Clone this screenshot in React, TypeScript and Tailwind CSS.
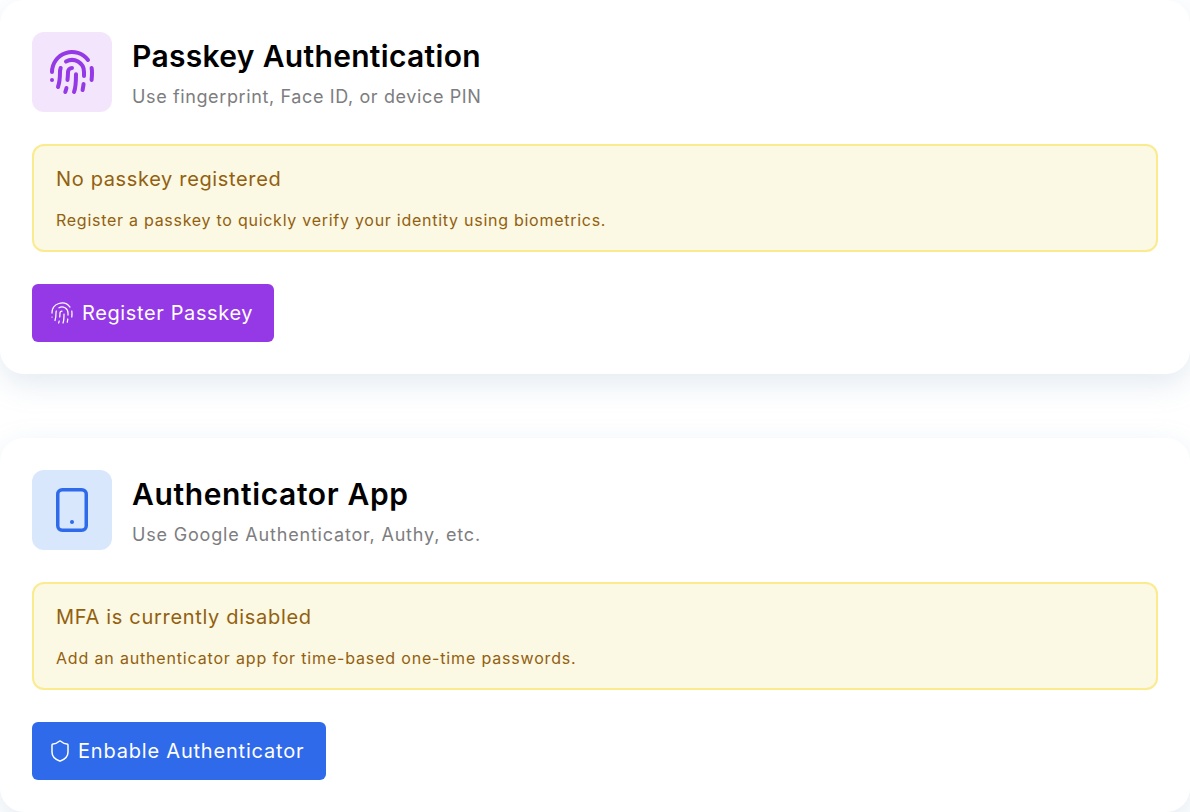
import { Fingerprint, Shield } from "lucide-react";

function Notice({ title, text, titleClass, textClass }: { title: string; text: string; titleClass: string; textClass: string }) {
  return (
    <div className="mt-8 h-[108px] rounded-xl border-2 border-[#fbeb8f] bg-[#fbf8e4] pl-[22px] pr-[23px] pt-[19px] text-[#92600f]">
      <p className={`text-[20px] leading-[28px] ${titleClass}`}>{title}</p>
      <p className={`mt-[15px] text-[16px] leading-[24px] ${textClass}`}>{text}</p>
    </div>
  );
}

export default function App() {
  return (
    <div
      className="flex h-[812px] flex-col gap-16 overflow-hidden bg-white text-black"
      style={{ fontFamily: '"Inter", "Noto Sans", sans-serif' }}
    >
      <section className="rounded-3xl bg-white p-8 shadow-[0_10px_30px_rgba(130,165,195,0.22)]">
        <div className="flex items-center gap-5">
          <div className="flex h-20 w-20 items-center justify-center rounded-xl bg-[#f3e6fc]">
            <Fingerprint size={48} strokeWidth={2} className="text-[#9538e6]" />
          </div>
          <div className="pt-[5px]">
            <h2 className="text-[30px] font-semibold leading-[36px] tracking-[0.32px]">Passkey Authentication</h2>
            <p className="mt-[9px] text-[18px] leading-[28px] tracking-[0.62px] text-[#7d7d80]">Use fingerprint, Face ID, or device PIN</p>
          </div>
        </div>
        <Notice
          title="No passkey registered"
          text="Register a passkey to quickly verify your identity using biometrics."
          titleClass="tracking-[0.65px]"
          textClass="tracking-[0.73px]"
        />
        <button className="mt-8 flex h-[58px] items-center gap-2 rounded-md bg-[#9538e6] pl-[18px] pr-[21px] text-[20px] tracking-[0.62px] text-white">
          <Fingerprint size={24} strokeWidth={1.25} />
          Register Passkey
        </button>
      </section>

      <section className="rounded-3xl bg-white p-8 shadow-[0_10px_30px_rgba(130,165,195,0.22)]">
        <div className="flex items-center gap-5">
          <div className="flex h-20 w-20 items-center justify-center rounded-xl bg-[#d8e7fb]">
            <svg width="32" height="44" viewBox="0 0 32 44" fill="none" className="text-[#2f6aeb]">
              <rect x="1.75" y="1.75" width="28.5" height="40.5" rx="4.5" stroke="currentColor" strokeWidth="3.5" />
              <circle cx="16" cy="34" r="2" fill="currentColor" />
            </svg>
          </div>
          <div className="pt-[5px]">
            <h2 className="text-[30px] font-semibold leading-[36px] tracking-[0.62px]">Authenticator App</h2>
            <p className="mt-[9px] text-[18px] leading-[28px] tracking-[0.81px] text-[#7d7d80]">Use Google Authenticator, Authy, etc.</p>
          </div>
        </div>
        <Notice
          title="MFA is currently disabled"
          text="Add an authenticator app for time-based one-time passwords."
          titleClass="tracking-[0.69px]"
          textClass="tracking-[0.83px]"
        />
        <button className="mt-8 flex h-[58px] items-center gap-1.5 rounded-md bg-[#2f6aeb] pl-[16px] pr-[22px] text-[20px] tracking-[0.8px] text-white">
          <Shield size={24} strokeWidth={1.5} />
          Enbable Authenticator
        </button>
      </section>
    </div>
  );
}
